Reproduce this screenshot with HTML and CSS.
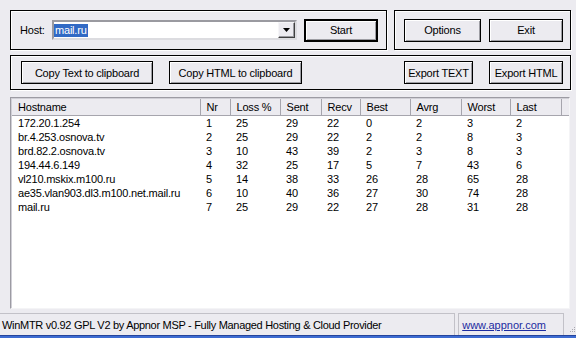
FILE: index.html
```html
<!DOCTYPE html>
<html lang="en">
<head>
  <meta charset="UTF-8" />
  <title>WinMTR</title>
  <link rel="stylesheet" href="styles.css">
</head>
<body>

  <div class="window">
    <div class="top">
      <div class="group host-group">
        <span class="host-label">Host:</span>
        <div class="combo">
          <span class="combo-text"><span class="sel">mail.ru</span></span>
          <span class="combo-btn">
            <svg width="7" height="4" viewBox="0 0 7 4"><path d="M0 0h7L3.5 4z" fill="#000"/></svg>
          </span>
        </div>
        <button class="btn btn-default start">Start</button>
      </div>
      <div class="group opts-group">
        <button class="btn options">Options</button>
        <button class="btn exit">Exit</button>
      </div>
    </div>

    <div class="group export-group">
      <button class="btn copy-text">Copy Text to clipboard</button>
      <button class="btn copy-html">Copy HTML to clipboard</button>
      <span class="spacer"></span>
      <button class="btn export-text">Export TEXT</button>
      <button class="btn export-html">Export HTML</button>
    </div>

    <div class="list">
      <table>
        <colgroup>
          <col class="c-host"><col class="c-nr"><col class="c-loss"><col class="c-sent"><col class="c-recv">
          <col class="c-best"><col class="c-avrg"><col class="c-worst"><col class="c-last"><col>
        </colgroup>
        <thead>
          <tr>
            <th>Hostname</th><th>Nr</th><th>Loss %</th><th>Sent</th><th>Recv</th>
            <th>Best</th><th>Avrg</th><th>Worst</th><th>Last</th><th class="filler"></th>
          </tr>
        </thead>
        <tbody>
          <tr><td>172.20.1.254</td><td>1</td><td>25</td><td>29</td><td>22</td><td>0</td><td>2</td><td>3</td><td>2</td><td></td></tr>
          <tr><td>br.4.253.osnova.tv</td><td>2</td><td>25</td><td>29</td><td>22</td><td>2</td><td>2</td><td>8</td><td>3</td><td></td></tr>
          <tr><td>brd.82.2.osnova.tv</td><td>3</td><td>10</td><td>43</td><td>39</td><td>2</td><td>3</td><td>8</td><td>3</td><td></td></tr>
          <tr><td>194.44.6.149</td><td>4</td><td>32</td><td>25</td><td>17</td><td>5</td><td>7</td><td>43</td><td>6</td><td></td></tr>
          <tr><td>vl210.mskix.m100.ru</td><td>5</td><td>14</td><td>38</td><td>33</td><td>26</td><td>28</td><td>65</td><td>28</td><td></td></tr>
          <tr><td>ae35.vlan903.dl3.m100.net.mail.ru</td><td>6</td><td>10</td><td>40</td><td>36</td><td>27</td><td>30</td><td>74</td><td>28</td><td></td></tr>
          <tr><td>mail.ru</td><td>7</td><td>25</td><td>29</td><td>22</td><td>27</td><td>28</td><td>31</td><td>28</td><td></td></tr>
        </tbody>
      </table>
    </div>
  </div>

  <div class="statusbar">
    <div class="panel panel-main">WinMTR v0.92 GPL V2 by Appnor MSP - Fully Managed Hosting &amp; Cloud Provider</div>
    <div class="panel panel-link"><a href="#">www.appnor.com</a></div>
    <span class="grip">
      <svg width="10" height="10" viewBox="0 0 10 10">
        <rect x="8" y="2" width="1" height="1" fill="#aaa9b0"/>
        <rect x="6" y="4" width="1" height="1" fill="#aaa9b0"/>
        <rect x="8" y="4" width="1" height="1" fill="#aaa9b0"/>
        <rect x="4" y="6" width="1" height="1" fill="#aaa9b0"/>
        <rect x="6" y="6" width="1" height="1" fill="#aaa9b0"/>
        <rect x="8" y="6" width="1" height="1" fill="#aaa9b0"/>
      </svg>
    </span>
  </div>
  <div class="frame-bottom"></div>

</body>
</html>
```

FILE: styles.css
```css
body {
  margin: 0;
  width: 576px;
  height: 338px;
  overflow: hidden;
  background: #ecebf0;
  color: #000;
  font-family: "Liberation Sans", Arial, sans-serif;
  font-size: 11px;
  letter-spacing: -0.2px;
}

.window {
  padding: 10px 5px 0 10px;
  display: flex;
  flex-direction: column;
}

.top {
  display: flex;
  gap: 7px;
  height: 40px;
}

.group {
  box-sizing: border-box;
  display: flex;
  align-items: center;
  border: 1px solid #000;
  box-shadow: inset 1px 1px #fff, 1px 1px #fff;
}

.host-group {
  width: 377px;
  padding: 0 8px 0 9px;
}

.host-label {
  width: 32px;
}

.combo {
  box-sizing: border-box;
  width: 245px;
  height: 20px;
  display: flex;
  align-items: center;
  background: #fff;
  border: 2px solid;
  border-color: #9a9aa0 #dcdce0 #dcdce0 #9a9aa0;
  margin-right: 7px;
}

.combo-text {
  flex: 1;
}

.sel {
  display: inline-block;
  background: #316ac5;
  color: #fff;
  line-height: 13px;
  padding: 0 1px;
}

.combo-btn {
  box-sizing: border-box;
  width: 17px;
  height: 16px;
  display: flex;
  align-items: center;
  justify-content: center;
  background: #ecebf0;
  border: 1px solid;
  border-color: #f6f6f8 #404040 #404040 #f6f6f8;
  box-shadow: inset -1px -1px #9a9aa0;
}

.btn {
  box-sizing: border-box;
  height: 23px;
  padding: 0;
  background: #ecebf0;
  color: #000;
  font: inherit;
  letter-spacing: inherit;
  border: 1px solid #000;
  box-shadow: inset 1px 1px #fff, inset -1px -1px #9d9da3;
}

.btn-default {
  border-width: 2px;
}

.start { width: 74px; }

.opts-group {
  width: 177px;
  padding: 0 7px 0 9px;
  gap: 8px;
}

.options { width: 77px; }
.exit { width: 74px; }

.export-group {
  width: 561px;
  height: 35px;
  margin-top: 5px;
  padding: 0 7px 0 10px;
  gap: 16px;
}

.export-group .spacer { flex: 1; margin-left: -16px; }
.copy-text { width: 132px; }
.copy-html { width: 133px; }
.export-text { width: 69px; }
.export-html { width: 74px; }

.list {
  box-sizing: border-box;
  width: 560px;
  height: 212px;
  margin-top: 7px;
  background: #fff;
  border: 1px solid;
  border-color: #9c9ba3 #f4f4f6 #f4f4f6 #9c9ba3;
  box-shadow: inset 1px 1px #d0cfd6;
  padding: 1px 0 0 1px;
}

table {
  width: 100%;
  border-collapse: collapse;
  table-layout: fixed;
}

.c-host { width: 188px; }
.c-nr { width: 30px; }
.c-loss { width: 50px; }
.c-sent { width: 41px; }
.c-recv { width: 39px; }
.c-best { width: 50px; }
.c-avrg { width: 51px; }
.c-worst { width: 49px; }
.c-last { width: 51px; }

th {
  height: 16px;
  padding: 0 6px;
  text-align: left;
  font-weight: normal;
  background: #ecebf0;
  border-right: 1px solid #a6a5ad;
  border-bottom: 1px solid #a6a5ad;
  white-space: nowrap;
}

th.filler {
  border-right: none;
}

td {
  height: 14px;
  line-height: 14px;
  padding: 0 6px;
  white-space: nowrap;
  overflow: hidden;
}

.statusbar {
  box-sizing: border-box;
  height: 24px;
  margin-top: 2px;
  padding-top: 2px;
  display: flex;
  letter-spacing: -0.3px;
}

.panel {
  box-sizing: border-box;
  display: flex;
  align-items: center;
  border: 1px solid #c2c1c8;
  border-bottom: none;
}

.panel-main {
  width: 456px;
  padding-left: 2px;
  border-left: none;
}

.panel-link {
  width: 106px;
  margin-left: 3px;
  padding-left: 3px;
  letter-spacing: 0;
}

.panel-link a {
  color: #1c2ca0;
}

.grip {
  display: flex;
  align-items: flex-end;
  margin-left: 2px;
}

.frame-bottom {
  height: 2px;
  background: #3d6bd1;
  border-top: 1px solid #25449c;
}
```
